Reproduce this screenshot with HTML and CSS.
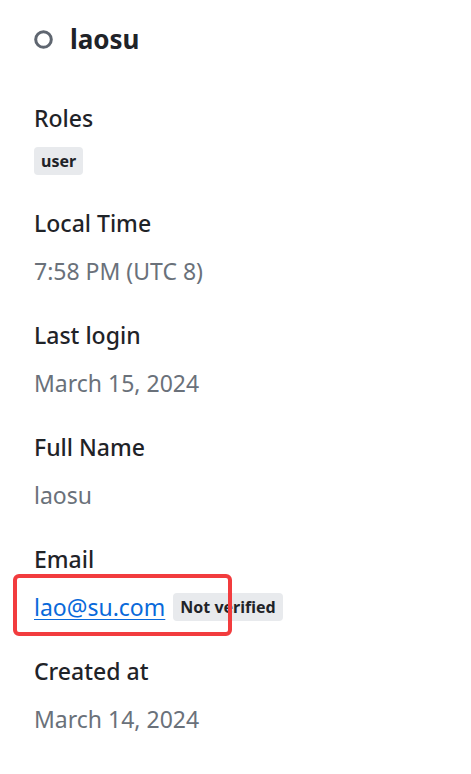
FILE: index.html
```html
<!DOCTYPE html>
<html lang="en">
<head>
<meta charset="utf-8">
<title>laosu</title>
<link rel="stylesheet" href="styles.css">
</head>
<body>
<main class="profile">
  <header class="profile-header">
    <svg class="status-icon" width="19" height="19" viewBox="0 0 19 19" aria-hidden="true">
      <circle cx="9.5" cy="9.5" r="7.8" fill="none" stroke="#5f6670" stroke-width="3"/>
    </svg>
    <h1 class="profile-name">laosu</h1>
  </header>

  <section class="field field-roles">
    <h2 class="field-label">Roles</h2>
    <div class="field-value"><span class="badge">user</span></div>
  </section>

  <section class="field">
    <h2 class="field-label">Local Time</h2>
    <div class="field-value">7:58 PM (UTC 8)</div>
  </section>

  <section class="field">
    <h2 class="field-label">Last login</h2>
    <div class="field-value">March 15, 2024</div>
  </section>

  <section class="field">
    <h2 class="field-label">Full Name</h2>
    <div class="field-value">laosu</div>
  </section>

  <section class="field">
    <h2 class="field-label">Email</h2>
    <div class="field-value email-row">
      <a class="email-link" href="#">lao@su.com</a>
      <span class="badge">Not verified</span>
      <span class="highlight-box" aria-hidden="true"></span>
    </div>
  </section>

  <section class="field">
    <h2 class="field-label">Created at</h2>
    <div class="field-value">March 14, 2024</div>
  </section>
</main>
</body>
</html>
```

FILE: styles.css
```css
html, body {
  margin: 0;
  padding: 0;
  background: #ffffff;
}

body {
  font-family: "Noto Sans", "Open Sans", sans-serif;
  color: #1f2328;
}

.profile {
  padding: 21px 0 0 34px;
}

.profile-header {
  display: flex;
  align-items: center;
  gap: 17px;
  height: 36px;
}

.status-icon {
  display: block;
  flex: none;
}

.profile-name {
  margin: 0;
  font-size: 26px;
  font-weight: 700;
  line-height: 36px;
  color: #1f2328;
}

.field {
  display: flex;
  flex-direction: column;
}

.field-roles {
  margin-top: 45px;
}

.field + .field {
  margin-top: 32px;
}

.field-label {
  margin: 0;
  font-size: 23px;
  font-weight: 500;
  line-height: 32px;
  color: #1f2328;
}

.field-value {
  margin-top: 16px;
  font-size: 23px;
  font-weight: 400;
  line-height: 32px;
  color: #6a717a;
}

.field-roles .field-value {
  margin-top: 10px;
  line-height: 28px;
}

.badge {
  display: inline-block;
  height: 28px;
  padding: 0 7px;
  border-radius: 4px;
  background: #e8eaed;
  color: #1f2328;
  font-size: 16px;
  font-weight: 700;
  line-height: 28px;
  vertical-align: middle;
}

.email-row {
  position: relative;
  display: flex;
  align-items: center;
  gap: 8px;
}

.email-link {
  color: #0969da;
  text-decoration: underline;
  text-underline-offset: 3px;
  text-decoration-thickness: 1px;
}

.highlight-box {
  position: absolute;
  left: -21px;
  top: -17px;
  width: 219px;
  height: 62px;
  box-sizing: border-box;
  border: 4px solid #f23c3e;
  border-radius: 6px;
}
```
